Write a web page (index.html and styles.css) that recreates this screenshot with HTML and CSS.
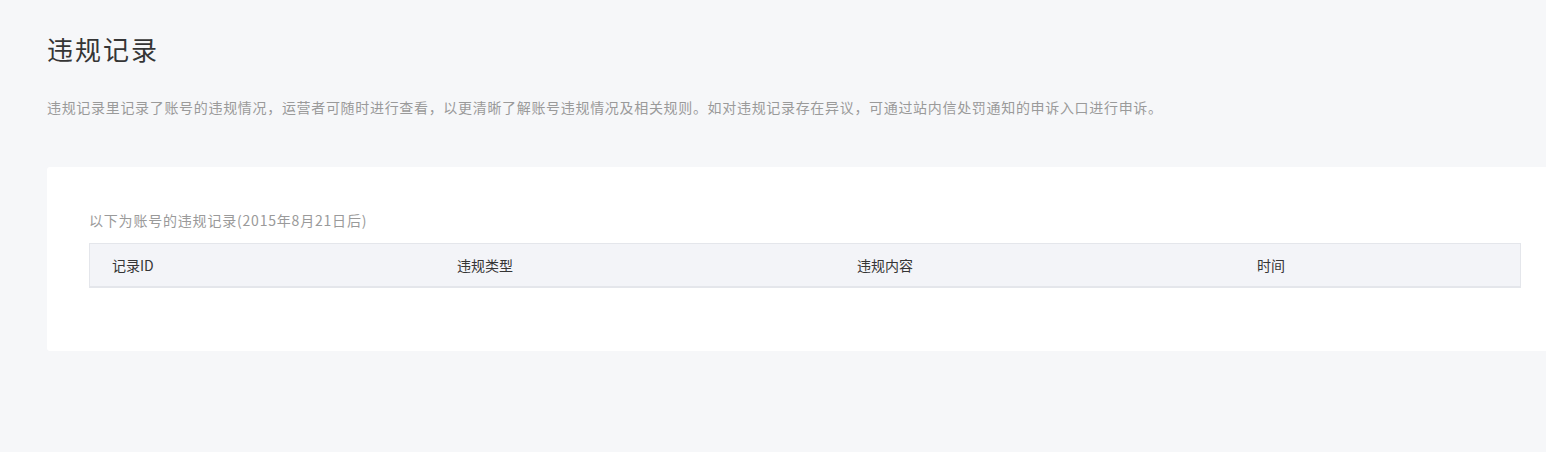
FILE: index.html
```html
<!DOCTYPE html>
<html lang="zh-CN">
<head>
<meta charset="utf-8">
<title>违规记录</title>
<link rel="stylesheet" href="styles.css">
</head>
<body>
<div class="page">
  <h1 class="title">违规记录</h1>
  <p class="desc">违规记录里记录了账号的违规情况，运营者可随时进行查看，以更清晰了解账号违规情况及相关规则。如对违规记录存在异议，可通过站内信处罚通知的申诉入口进行申诉。</p>
  <div class="card">
    <div class="card-tip">以下为账号的违规记录(2015年8月21日后)</div>
    <div class="table-head">
      <div class="cell">记录ID</div>
      <div class="cell">违规类型</div>
      <div class="cell">违规内容</div>
      <div class="cell">时间</div>
    </div>
  </div>
</div>
</body>
</html>
```

FILE: styles.css
```css
html, body {
  margin: 0;
  padding: 0;
  background: #f6f7f9;
}
body {
  font-family: "Noto Sans CJK SC", "Noto Sans", sans-serif;
  color: #353535;
}
.page {
  padding: 31px 0 0 47px;
}
.title {
  margin: 0;
  font-size: 26px;
  line-height: 36px;
  font-weight: 400;
  letter-spacing: 2px;
  color: #353535;
}
.desc {
  margin: 30px 0 0;
  font-size: 14px;
  line-height: 20px;
  letter-spacing: 0.68px;
  color: #9a9a9a;
}
.card {
  margin-top: 50px;
  background: #fff;
  border-radius: 3px 0 0 3px;
  padding: 43px 25px 63px 42px;
}
.card-tip {
  font-size: 14px;
  line-height: 20px;
  letter-spacing: 0.8px;
  color: #9a9a9a;
}
.table-head {
  margin-top: 13px;
  display: grid;
  grid-template-columns: 345px 400px 400px 1fr;
  background: #f3f4f8;
  border: 1px solid #e4e6eb;
  border-bottom-width: 2px;
}
.cell {
  padding-left: 22px;
  height: 42px;
  line-height: 42px;
  font-size: 14px;
  color: #353535;
}
```
